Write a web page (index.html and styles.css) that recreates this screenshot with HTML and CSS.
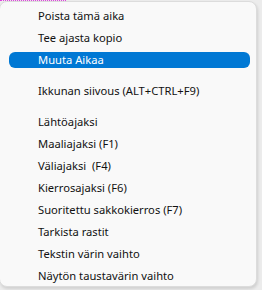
FILE: index.html
```html
<!DOCTYPE html>
<html lang="fi">
  <head>
    <meta charset="UTF-8" />
    <title>Valikko</title>
    <link rel="stylesheet" href="styles.css">
  </head>
  <body>
    <div class="focus-line"></div>
    <ul class="menu">
      <li class="item">Poista tämä aika</li>
      <li class="item">Tee ajasta kopio</li>
      <li class="item active">Muuta Aikaa</li>
      <li class="sep"></li>
      <li class="item">Ikkunan siivous (ALT+CTRL+F9)</li>
      <li class="sep"></li>
      <li class="item">Lähtöajaksi</li>
      <li class="item">Maaliajaksi (F1)</li>
      <li class="item">Väliajaksi&nbsp; (F4)</li>
      <li class="item">Kierrosajaksi (F6)</li>
      <li class="item">Suoritettu sakkokierros (F7)</li>
      <li class="item">Tarkista rastit</li>
      <li class="item">Tekstin värin vaihto</li>
      <li class="item">Näytön taustavärin vaihto</li>
    </ul>
  </body>
</html>
```

FILE: styles.css
```css
* {
  margin: 0;
  padding: 0;
  box-sizing: border-box;
}
body {
  background-color: #ececec;
  font-family: "Noto Sans", "Liberation Sans", sans-serif;
  font-size: 11.2px;
  color: #111;
  width: 262px;
  height: 290px;
  overflow: hidden;
}
.focus-line {
  height: 1px;
  width: 66px;
  border-top: 1px dotted #e040e0;
}
.menu {
  list-style: none;
  width: 258px;
  height: 286px;
  margin-left: -1px;
  padding: 3px 0;
  background-color: #f9f9f9;
  border: 1px solid #dcdcdc;
  border-radius: 8px;
  box-shadow: 1px 2px 3px rgba(0, 0, 0, 0.12);
}
.item {
  height: 22px;
  line-height: 22px;
  padding-left: 38px;
  white-space: pre;
}
.item.active {
  position: relative;
  z-index: 0;
  color: #fff;
}
.item.active::before {
  content: "";
  position: absolute;
  left: 9px;
  right: 6px;
  top: 3px;
  bottom: 3px;
  background-color: #0078d4;
  border-radius: 6px;
  z-index: -1;
}
.sep {
  height: 9px;
  margin-left: 38px;
  margin-right: 5px;
  border-bottom: 5px solid #f9f9f9;
  border-top: 4px solid #f9f9f9;
  background-color: #d6d6d6;
}
```
